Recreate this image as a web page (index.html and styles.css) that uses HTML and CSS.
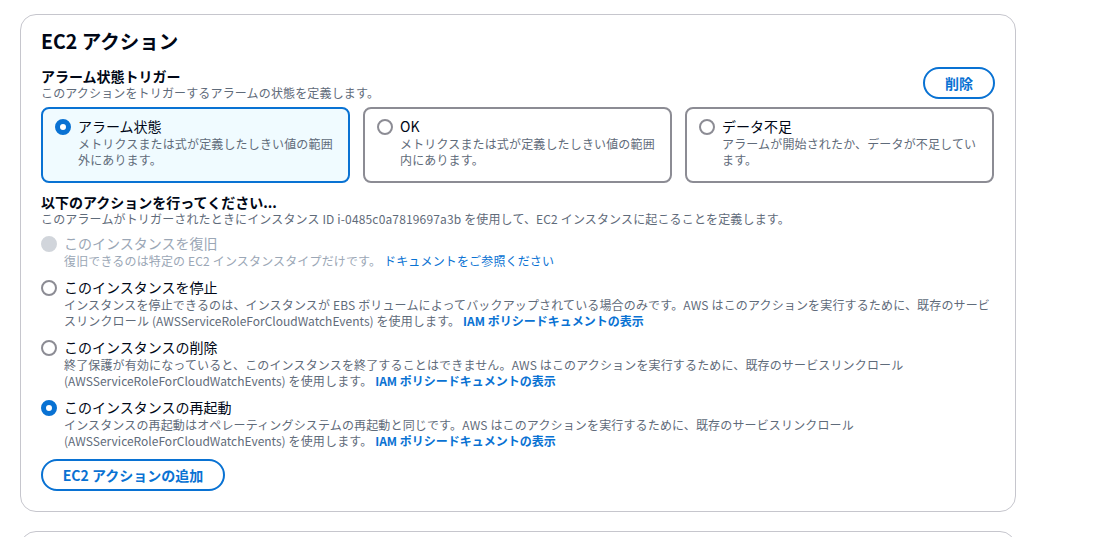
FILE: index.html
```html
<!DOCTYPE html>
<html lang="ja">
<head>
<meta charset="utf-8">
<title>EC2 アクション</title>
<link rel="stylesheet" href="styles.css">
</head>
<body>
<div class="page">
  <section class="card">
    <h2 class="card-title">EC2 アクション</h2>

    <div class="trigger-head">
      <div>
        <div class="field-label">アラーム状態トリガー</div>
        <div class="field-desc">このアクションをトリガーするアラームの状態を定義します。</div>
      </div>
      <button class="btn">削除</button>
    </div>

    <div class="tiles">
      <div class="tile tile-selected">
        <span class="radio radio-checked"></span>
        <div class="opt-text">
          <div class="opt-label">アラーム状態</div>
          <div class="opt-desc">メトリクスまたは式が定義したしきい値の範囲<br>外にあります。</div>
        </div>
      </div>
      <div class="tile">
        <span class="radio"></span>
        <div class="opt-text">
          <div class="opt-label">OK</div>
          <div class="opt-desc">メトリクスまたは式が定義したしきい値の範囲<br>内にあります。</div>
        </div>
      </div>
      <div class="tile">
        <span class="radio"></span>
        <div class="opt-text">
          <div class="opt-label">データ不足</div>
          <div class="opt-desc">アラームが開始されたか、データが不足してい<br>ます。</div>
        </div>
      </div>
    </div>

    <div class="action-head">
      <div class="field-label">以下のアクションを行ってください...</div>
      <div class="field-desc">このアラームがトリガーされたときにインスタンス ID i-0485c0a7819697a3b を使用して、EC2 インスタンスに起こることを定義します。</div>
    </div>

    <div class="options">
      <div class="option option-disabled">
        <span class="radio radio-disabled"></span>
        <div class="opt-text">
          <div class="opt-label">このインスタンスを復旧</div>
          <div class="opt-desc">復旧できるのは特定の EC2 インスタンスタイプだけです。 <a class="link">ドキュメントをご参照ください</a></div>
        </div>
      </div>
      <div class="option">
        <span class="radio"></span>
        <div class="opt-text">
          <div class="opt-label">このインスタンスを停止</div>
          <div class="opt-desc">インスタンスを停止できるのは、インスタンスが EBS ボリュームによってバックアップされている場合のみです。AWS はこのアクションを実行するために、既存のサービ<br>スリンクロール <span class="name">(AWSServiceRoleForCloudWatchEvents)</span> を使用します。 <a class="link link-strong">IAM ポリシードキュメントの表示</a></div>
        </div>
      </div>
      <div class="option">
        <span class="radio"></span>
        <div class="opt-text">
          <div class="opt-label">このインスタンスの削除</div>
          <div class="opt-desc">終了保護が有効になっていると、このインスタンスを終了することはできません。AWS はこのアクションを実行するために、既存のサービスリンクロール<br><span class="name">(AWSServiceRoleForCloudWatchEvents)</span> を使用します。 <a class="link link-strong">IAM ポリシードキュメントの表示</a></div>
        </div>
      </div>
      <div class="option">
        <span class="radio radio-checked"></span>
        <div class="opt-text">
          <div class="opt-label">このインスタンスの再起動</div>
          <div class="opt-desc">インスタンスの再起動はオペレーティングシステムの再起動と同じです。AWS はこのアクションを実行するために、既存のサービスリンクロール<br><span class="name">(AWSServiceRoleForCloudWatchEvents)</span> を使用します。 <a class="link link-strong">IAM ポリシードキュメントの表示</a></div>
        </div>
      </div>
    </div>

    <div class="footer">
      <button class="btn btn-wide">EC2 アクションの追加</button>
    </div>
  </section>
  <section class="card card-next"></section>
</div>
</body>
</html>
```

FILE: styles.css
```css
* { box-sizing: border-box; }

html, body {
  margin: 0;
  padding: 0;
  background: #ffffff;
}

body {
  font-family: "Noto Sans CJK JP", "Noto Sans", sans-serif;
  color: #000716;
  overflow: hidden;
  height: 537px;
}

.page {
  padding: 14px 0 0 20px;
  width: 1016px;
  display: flex;
  flex-direction: column;
  gap: 19px;
}

.card {
  border: 1px solid #c6c6cd;
  border-radius: 16px;
  padding: 14px 21px 20px 20px;
  background: #ffffff;
}

.card-next {
  height: 60px;
}

.card-title {
  margin: 0;
  font-size: 19.5px;
  line-height: 24px;
  font-weight: 700;
}

.trigger-head {
  margin-top: 14px;
  display: flex;
  justify-content: space-between;
  align-items: flex-start;
}

.field-label {
  font-size: 14px;
  line-height: 18px;
  font-weight: 700;
}

.field-desc {
  font-size: 12px;
  line-height: 16px;
  color: #5f6b7a;
  letter-spacing: 0.15px;
}

.btn {
  font-family: inherit;
  font-size: 14px;
  font-weight: 700;
  color: #0972d3;
  background: #ffffff;
  border: 2px solid #0972d3;
  border-radius: 16px;
  height: 32px;
  padding: 0 20px;
  margin: 0 -1px 0 0;
  line-height: 28px;
}

.btn-wide {
  width: 184px;
  padding: 0;
}

.tiles {
  margin-top: 6px;
  display: grid;
  grid-template-columns: 1fr 1fr 1fr;
  gap: 13px;
}

.tile {
  display: flex;
  gap: 7px;
  align-items: flex-start;
  border: 2px solid #8c8c94;
  border-radius: 8px;
  height: 76px;
  padding: 8px 12px 10px 12px;
}

.tile-selected {
  border-color: #0972d3;
  background: #f0fbff;
}

.radio {
  flex: none;
  width: 16px;
  height: 16px;
  border-radius: 50%;
  border: 2px solid #8c8c94;
  background: #ffffff;
  margin-top: 2px;
}

.radio-checked {
  border: 5px solid #0972d3;
}

.radio-disabled {
  border-color: #d1d5db;
  background: #d1d5db;
}

.opt-text {
  min-width: 0;
}

.opt-label {
  font-size: 14px;
  line-height: 19px;
}

.opt-desc {
  font-size: 12px;
  line-height: 16px;
  color: #5f6b7a;
  letter-spacing: 0.15px;
}

.name {
  letter-spacing: 0;
}

.action-head {
  margin-top: 10px;
}

.options {
  margin-top: 7px;
  display: flex;
  flex-direction: column;
  gap: 9px;
}

.option {
  display: flex;
  gap: 7px;
  align-items: flex-start;
}

.option-disabled .opt-label,
.option-disabled .opt-desc {
  color: #9ba7b6;
}

.link {
  color: #0972d3;
  text-decoration: none;
}

.link-strong {
  font-weight: 700;
  letter-spacing: 0;
}

.footer {
  margin-top: 10px;
}
```
